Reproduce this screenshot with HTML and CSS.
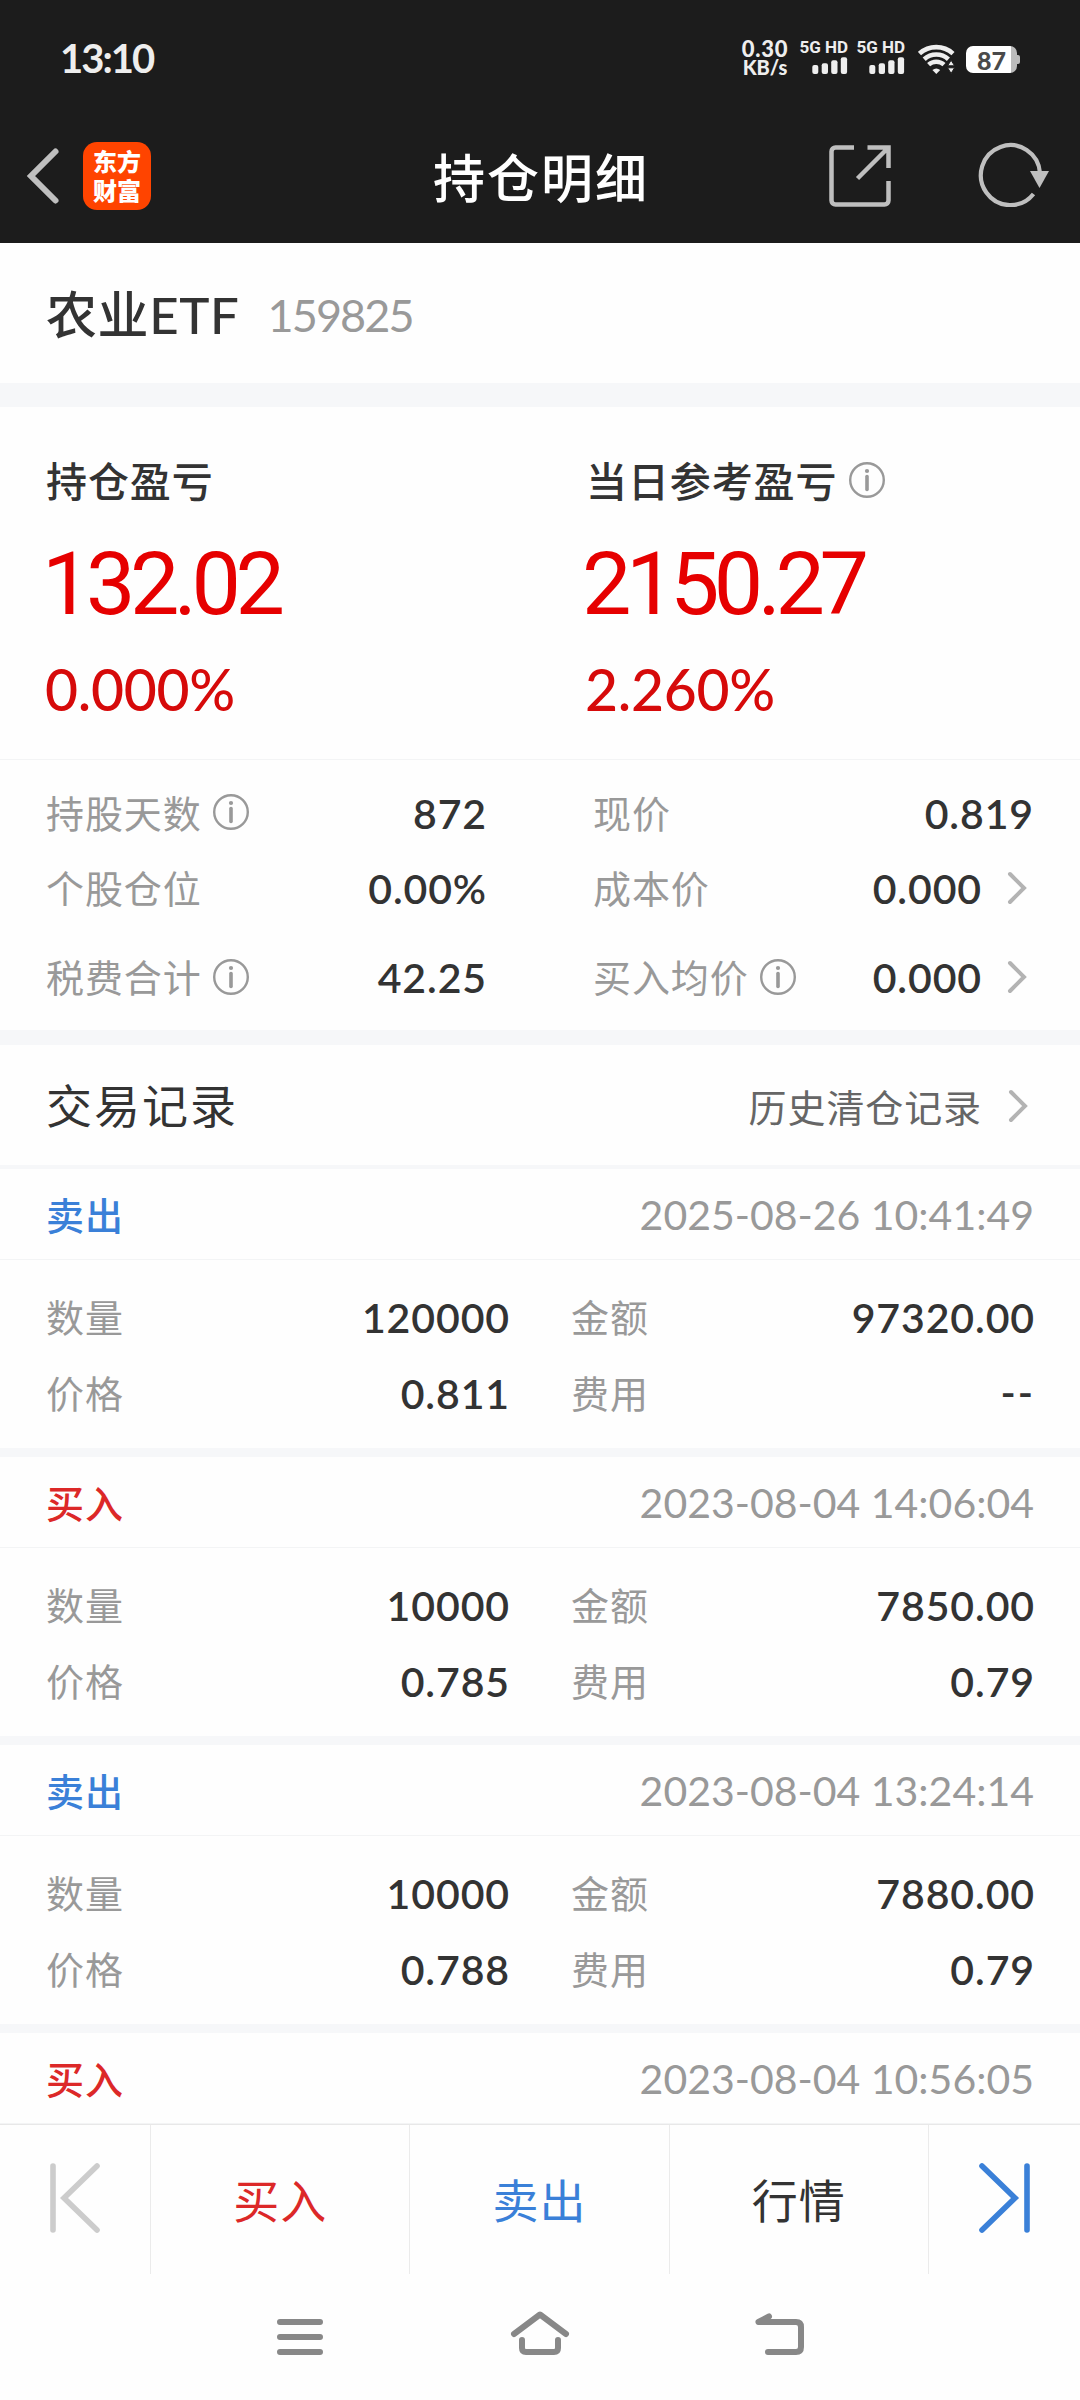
FILE: index.html
```html
<!DOCTYPE html>
<html lang="zh-CN">
<head>
  <meta charset="UTF-8" />
  <meta name="viewport" content="width=device-width, initial-scale=1.0"/>
  <title>持仓明细</title>
  <link rel="stylesheet" href="styles.css">
</head>
<body>
  <svg class="defs" width="0" height="0">
    <symbol id="icon-info" viewBox="0 0 36 36">
      <circle cx="18" cy="18" r="16.8" fill="none" stroke="#999" stroke-width="2.4"/>
      <circle cx="18" cy="9" r="2.1" fill="#999"/>
      <path d="M18 14.5v13" stroke="#999" stroke-width="3.6" stroke-linecap="round"/>
    </symbol>
    <symbol id="icon-arrow" viewBox="0 0 20 34">
      <path d="M3 3l14 14L3 31" fill="none" stroke="#b3b3b3" stroke-width="4" stroke-linecap="round"/>
    </symbol>
    <symbol id="icon-signal" viewBox="0 0 36 17">
      <rect x="0.3" y="8" width="6" height="9" rx="2"/>
      <rect x="9.7" y="6.3" width="6.3" height="10.7" rx="2"/>
      <rect x="19.2" y="3.3" width="6.3" height="13.7" rx="2"/>
      <rect x="28.8" y="0.2" width="6.3" height="16.8" rx="2"/>
    </symbol>
  </svg>

  <header class="top">
    <div class="status-bar">
      <span class="time">13:10</span>
      <div class="status-right">
        <div class="net-speed"><span>0.30</span><span class="unit">KB/s</span></div>
        <div class="sim"><span>5G HD</span><svg width="36" height="17"><use href="#icon-signal"/></svg></div>
        <div class="sim"><span>5G HD</span><svg width="36" height="17"><use href="#icon-signal"/></svg></div>
        <svg class="wifi" width="38" height="30" viewBox="0 0 38 30">
          <g fill="none" stroke="#eee" stroke-width="4.6">
            <path d="M1.5 9.6a25 25 0 0 1 33.5 0"/>
            <path d="M6.2 15.2a18 18 0 0 1 24.2 0"/>
            <path d="M10.6 20.6a11.6 11.6 0 0 1 15.4 0"/>
          </g>
          <path d="M14.4 26q3.9-3 7.8 0L18.3 30z" fill="#eee"/>
          <path d="M29.6 21.8l3.5-5.6 3.5 5.6zM29.6 23.8h7l-3.5 5.6z" fill="#eee" stroke="#1c1c1c" stroke-width="1"/>
        </svg>
        <div class="battery"><span>87</span></div>
      </div>
    </div>
    <nav class="title-bar">
      <div class="title-left">
        <svg width="34" height="58" viewBox="0 0 34 58"><path d="M29.5 4.5L5 29l24.5 24.5" fill="none" stroke="#bfbfbf" stroke-width="6" stroke-linecap="round"/></svg>
        <div class="logo"><span>东方</span><span>财富</span></div>
      </div>
      <h1>持仓明细</h1>
      <div class="title-right">
        <svg width="62" height="62" viewBox="0 0 62 62" fill="none" stroke="#bfbfbf" stroke-width="4.5">
          <path d="M25 2.5H6.5a4 4 0 0 0-4 4v49a4 4 0 0 0 4 4h49a4 4 0 0 0 4-4V36"/>
          <path d="M38.5 2.5h21V23M59 3L28.5 33.5"/>
        </svg>
        <svg class="refresh" width="74" height="66" viewBox="0 0 74 66">
          <path d="M62 32A29.6 30 0 1 0 55.5 53" fill="none" stroke="#bfbfbf" stroke-width="4.2"/>
          <path d="M52 30h19l-9.5 17z" fill="#bfbfbf"/>
        </svg>
      </div>
    </nav>
  </header>

  <main>
    <section class="stock">
      <span class="stock-name">农业ETF</span>
      <span class="stock-code">159825</span>
    </section>

    <section class="profit">
      <div class="profit-col">
        <div class="profit-label">持仓盈亏</div>
        <div class="profit-amount">132.02</div>
        <div class="profit-rate">0.000%</div>
      </div>
      <div class="profit-col">
        <div class="profit-label">当日参考盈亏<svg class="info" width="36" height="36"><use href="#icon-info"/></svg></div>
        <div class="profit-amount">2150.27</div>
        <div class="profit-rate">2.260%</div>
      </div>
    </section>

    <section class="metrics">
      <div class="metric">
        <span class="label">持股天数<svg class="info" width="36" height="36"><use href="#icon-info"/></svg></span>
        <span class="value">872</span>
      </div>
      <div class="metric">
        <span class="label">现价</span>
        <span class="value">0.819</span>
      </div>
      <div class="metric">
        <span class="label">个股仓位</span>
        <span class="value">0.00%</span>
      </div>
      <div class="metric">
        <span class="label">成本价</span>
        <span class="value">0.000</span>
        <svg class="arrow" width="20" height="34"><use href="#icon-arrow"/></svg>
      </div>
      <div class="metric">
        <span class="label">税费合计<svg class="info" width="36" height="36"><use href="#icon-info"/></svg></span>
        <span class="value">42.25</span>
      </div>
      <div class="metric">
        <span class="label">买入均价<svg class="info" width="36" height="36"><use href="#icon-info"/></svg></span>
        <span class="value">0.000</span>
        <svg class="arrow" width="20" height="34"><use href="#icon-arrow"/></svg>
      </div>
    </section>

    <section class="records-head">
      <h2>交易记录</h2>
      <span class="history">历史清仓记录</span>
      <svg class="arrow" width="20" height="34"><use href="#icon-arrow"/></svg>
    </section>

    <section class="record">
      <div class="record-head"><span class="sell">卖出</span><span class="date">2025-08-26 10:41:49</span></div>
      <div class="record-body">
        <div class="item"><span class="label">数量</span><span class="value">120000</span></div>
        <div class="item"><span class="label">金额</span><span class="value">97320.00</span></div>
        <div class="item"><span class="label">价格</span><span class="value">0.811</span></div>
        <div class="item"><span class="label">费用</span><span class="value dash">--</span></div>
      </div>
    </section>

    <section class="record">
      <div class="record-head"><span class="buy">买入</span><span class="date">2023-08-04 14:06:04</span></div>
      <div class="record-body">
        <div class="item"><span class="label">数量</span><span class="value">10000</span></div>
        <div class="item"><span class="label">金额</span><span class="value">7850.00</span></div>
        <div class="item"><span class="label">价格</span><span class="value">0.785</span></div>
        <div class="item"><span class="label">费用</span><span class="value">0.79</span></div>
      </div>
    </section>

    <section class="record">
      <div class="record-head"><span class="sell">卖出</span><span class="date">2023-08-04 13:24:14</span></div>
      <div class="record-body">
        <div class="item"><span class="label">数量</span><span class="value">10000</span></div>
        <div class="item"><span class="label">金额</span><span class="value">7880.00</span></div>
        <div class="item"><span class="label">价格</span><span class="value">0.788</span></div>
        <div class="item"><span class="label">费用</span><span class="value">0.79</span></div>
      </div>
    </section>

    <section class="record">
      <div class="record-head"><span class="buy">买入</span><span class="date">2023-08-04 10:56:05</span></div>
    </section>
  </main>

  <footer class="actions">
    <div class="action side">
      <svg width="54" height="74" viewBox="0 0 54 74" fill="none" stroke="#ccc" stroke-width="5.6" stroke-linecap="round">
        <path d="M5 5v64M49 5L16 37l33 32"/>
      </svg>
    </div>
    <div class="action buy">买入</div>
    <div class="action sell">卖出</div>
    <div class="action">行情</div>
    <div class="action side">
      <svg width="54" height="74" viewBox="0 0 54 74" fill="none" stroke="#3a80d8" stroke-width="5.6" stroke-linecap="round">
        <path d="M50 5v64M5 5l33 32L5 69"/>
      </svg>
    </div>
  </footer>

  <div class="system-nav">
    <svg width="60" height="60" viewBox="0 0 60 60"><path d="M10 15h40M10 30h40M10 45h40"/></svg>
    <svg width="60" height="60" viewBox="0 0 60 60"><path d="M4 27L30 7.5 56 27M12 33v8q0 4 4 4h28q4 0 4-4v-8"/></svg>
    <svg width="60" height="60" viewBox="0 0 60 60"><path d="M19 9.5L8.5 15H46q5 0 5 5v20q0 5-5 5H18"/></svg>
  </div>
</body>
</html>
```
FILE: styles.css
```css
* {
  box-sizing: border-box;
}

body {
  margin: 0;
  width: 1080px;
  height: 2400px;
  display: flex;
  flex-direction: column;
  font-family: Lato, "Noto Sans CJK SC", sans-serif;
  font-variant-numeric: tabular-nums;
  background: #fefefe;
  color: #333;
  overflow: hidden;
}

h1,
h2 {
  margin: 0;
}

svg {
  display: block;
  flex: none;
}

.defs {
  position: absolute;
}

.top {
  flex: none;
  height: 243px;
  background: #1c1c1c;
  color: #eee;
}

/* status bar */
.status-bar {
  display: flex;
  justify-content: space-between;
  height: 108px;
  padding: 37px 60px 0 60px;
}

.time {
  font-size: 40px;
  font-weight: 700;
  line-height: 42px;
  letter-spacing: -2px;
}

.status-right {
  display: flex;
  align-items: flex-start;
  margin-top: -1px;
}

.net-speed {
  display: flex;
  flex-direction: column;
  align-items: center;
  width: 50px;
  margin-right: 10px;
  padding-top: 3px;
  font-size: 22px;
  font-weight: 900;
  line-height: 19px;
  letter-spacing: 0.8px;
}

.net-speed .unit {
  font-size: 20px;
  letter-spacing: 0;
}

.sim {
  display: flex;
  flex-direction: column;
  align-items: flex-end;
  width: 48px;
  margin-right: 9px;
  padding-top: 4px;
  font-family: Roboto, sans-serif;
  font-size: 17px;
  font-weight: 700;
  line-height: 14px;
  white-space: nowrap;
}

.sim svg {
  margin-top: 3px;
  fill: #eee;
}

.wifi {
  margin: 8px 10px 0 4px;
}

.battery {
  position: relative;
  width: 51px;
  height: 27px;
  margin: 10px 3px 0 0;
  border-radius: 7px;
  background: linear-gradient(to right, #fff 45px, #bbb 45px);
  color: #4a4a4a;
  font-size: 25px;
  font-weight: 900;
  line-height: 28px;
  text-align: center;
}

.battery::after {
  content: "";
  position: absolute;
  right: -3px;
  top: 9px;
  width: 4px;
  height: 9px;
  border-radius: 0 2px 2px 0;
  background: #bbb;
}

/* title bar */
.title-bar {
  display: grid;
  grid-template-columns: 1fr auto 1fr;
  align-items: center;
  height: 135px;
  padding: 0 28px 0 26px;
}

.title-left,
.title-right {
  display: flex;
  align-items: center;
}

.title-left {
  gap: 23px;
}

.title-right {
  justify-content: flex-end;
  gap: 87px;
}

.refresh {
  margin-bottom: 4px;
}

.logo {
  display: flex;
  flex-direction: column;
  align-items: center;
  justify-content: center;
  width: 68px;
  height: 68px;
  border-radius: 14px;
  background: #ff4400;
  color: #fff;
  font-size: 24px;
  font-weight: 900;
  line-height: 29px;
}

.title-bar h1 {
  padding: 4px 0 0 4px;
  font-size: 52px;
  font-weight: 500;
  line-height: 60px;
  letter-spacing: 2px;
  color: #fff;
}

main {
  flex: none;
  height: 1881px;
  overflow: hidden;
}

/* stock name */
.stock {
  display: flex;
  align-items: center;
  height: 164px;
  padding: 3px 46px 0;
  border-bottom: 24px solid #f6f7f9;
}

.stock-name {
  font-size: 51px;
  font-weight: 500;
  line-height: 60px;
  letter-spacing: 0.6px;
}

.stock-code {
  margin-left: 28px;
  font-size: 45px;
  line-height: 60px;
  letter-spacing: -1.9px;
  color: #999;
}

/* profit */
.profit {
  display: flex;
  height: 353px;
  padding: 40px 46px 0;
  border-bottom: 1px solid #f3f4f5;
}

.profit-col {
  flex: none;
  width: 540px;
}

.profit-label {
  display: flex;
  align-items: center;
  height: 70px;
  font-size: 41px;
  font-weight: 500;
  line-height: 70px;
  letter-spacing: 0.9px;
}

.profit-amount {
  margin-left: -4px;
  font-family: Roboto, sans-serif;
  font-size: 88px;
  line-height: 134px;
  letter-spacing: -5.5px;
  color: #e60000;
}

.profit-rate {
  margin-left: -1px;
  font-size: 57px;
  font-weight: 500;
  line-height: 76px;
  letter-spacing: -0.3px;
  color: #d60a0a;
}

.info {
  margin: 0 0 2px 11px;
}

.profit .info {
  margin: 0 0 4px 12px;
}

/* metrics */
.metrics {
  display: grid;
  grid-template-columns: 440px 440px;
  grid-template-rows: 75px 75px 104px;
  column-gap: 107px;
  height: 285px;
  padding: 16px 46px 0;
  border-bottom: 15px solid #f6f7f9;
}

.metric,
.item {
  display: flex;
  align-items: center;
}

.label {
  display: flex;
  align-items: center;
  height: 56px;
  padding-bottom: 2px;
  font-size: 38px;
  line-height: 54px;
  letter-spacing: 0.9px;
  color: #999;
}

.label .info {
  margin-bottom: 1px;
}

.value {
  margin: 0 -1px 0 auto;
  font-size: 41px;
  font-weight: 600;
  line-height: 56px;
  letter-spacing: 0.9px;
}

.dash {
  padding-bottom: 4px;
  letter-spacing: 2px;
}

.arrow {
  margin: 0 6px 2px 26px;
}

/* records */
.records-head {
  display: flex;
  align-items: center;
  height: 124px;
  padding: 2px 46px 0;
  border-bottom: 4px solid #f6f7f9;
}

.records-head h2 {
  font-size: 46px;
  font-weight: 400;
  line-height: 60px;
  letter-spacing: 2px;
}

.history {
  margin-left: auto;
  padding-top: 2px;
  font-size: 38px;
  line-height: 56px;
  letter-spacing: 0.9px;
  color: #666;
}

.records-head .arrow {
  margin-bottom: 0;
}

.record {
  height: 288px;
  border-bottom: 9px solid #f6f7f9;
}

.record-head {
  display: flex;
  align-items: center;
  justify-content: space-between;
  height: 91px;
  padding: 2px 46px 0;
  border-bottom: 1px solid #f3f4f5;
  font-size: 38px;
  line-height: 56px;
}

.record-head .buy,
.record-head .sell {
  padding-bottom: 1px;
  font-weight: 500;
  letter-spacing: 0.9px;
}

.buy {
  color: #dc2828;
}

.sell {
  color: #3a80d8;
}

.date {
  font-size: 41px;
  color: #999;
}

.record-body {
  display: grid;
  grid-template-columns: 463px 463px;
  grid-template-rows: 76px 76px;
  column-gap: 62px;
  padding: 20px 46px 16px;
}

/* bottom actions */
.actions {
  flex: none;
  display: flex;
  height: 150px;
  border-top: 1px solid #e8e8e8;
}

.action {
  display: flex;
  align-items: center;
  justify-content: center;
  flex: 1;
  padding-top: 2px;
  border-right: 1px solid #ebebeb;
  font-size: 46px;
  line-height: 60px;
  letter-spacing: 1px;
}

.action.side {
  flex: none;
  width: 151px;
  padding-top: 0;
  padding-bottom: 3px;
}

.action:last-child {
  border-right: none;
}

.system-nav {
  display: flex;
  justify-content: center;
  gap: 180px;
  padding-top: 33px;
}

.system-nav svg {
  fill: none;
  stroke: #888;
  stroke-width: 6;
  stroke-linecap: round;
  stroke-linejoin: round;
}
```
